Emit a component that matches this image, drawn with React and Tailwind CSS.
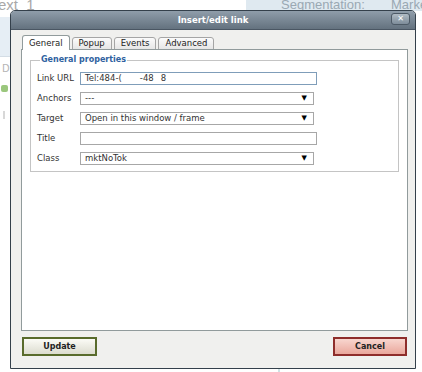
import React from "react"

const font = { fontFamily: '"DejaVu Sans", Verdana, sans-serif' }

function Tab({ label, active }) {
  return (
    <div
      className={
        active
          ? "h-[15px] px-[6px] flex items-center text-[8.5px] text-[#222] bg-white border border-b-0 border-[#919b9c] rounded-t-[3px] relative z-10"
          : "h-[13px] mt-[2px] px-[6px] flex items-center text-[8.5px] text-[#222] bg-gradient-to-b from-[#fbfbfb] to-[#e6e6e6] border border-[#a5a5a5] rounded-t-[3px]"
      }
    >
      {label}
    </div>
  )
}

function Row({ label, children }) {
  return (
    <div className="h-[20px] flex items-center">
      <span className="w-[43px] text-[8.5px] text-[#333]">{label}</span>
      {children}
    </div>
  )
}

function SelectBox({ value }) {
  return (
    <div className="w-[234px] h-[13px] border border-[#a7a7a7] bg-white flex items-center justify-between pl-[4px] pr-[6px]">
      <span className="text-[8.5px] text-[#333] leading-none">{value}</span>
      <span className="text-[7px] text-black leading-none">▼</span>
    </div>
  )
}

export default function App() {
  return (
    <div className="relative w-[422px] h-[372px] bg-white overflow-hidden" style={font}>
      {/* page behind the dialog */}
      <div className="absolute left-[-2px] top-[-6px] text-[15px] text-[#a8a8a8]" style={{ fontFamily: '"Liberation Sans", Arial, sans-serif' }}>
        ext_1
      </div>
      <div className="absolute left-0 top-[17px] w-[12px] h-[40px] bg-[#e6eef5] border-b border-[#d4dde5]" />
      <div className="absolute left-[2px] top-[61px] text-[10px] text-[#b5b5b5]">D</div>
      <div className="absolute left-[1px] top-[85px] w-[7px] h-[7px] rounded-[2px] bg-[#9bc77d]" />
      <div className="absolute left-[3px] top-[111px] w-[2px] h-[8px] bg-[#d8d8d8]" />
      <div className="absolute left-[246px] top-0 w-[176px] h-[11px] bg-[#dfe9f0]" />
      <div className="absolute left-[281px] top-[-5px] text-[13px] text-[#9aa8b3]" style={{ fontFamily: '"Liberation Sans", Arial, sans-serif' }}>
        Segmentation:
      </div>
      <div className="absolute left-[391px] top-[-5px] text-[13px] text-[#9aa8b3]" style={{ fontFamily: '"Liberation Sans", Arial, sans-serif' }}>
        Marke
      </div>
      <div className="absolute left-[278px] top-[368px] w-[2px] h-[6px] bg-[#cfe3e6]" />

      {/* dialog window */}
      <div className="absolute left-[10px] top-[10px] w-[406px] h-[359px] border border-[#34404b] rounded-t-[5px] bg-[#f0f0ee] flex flex-col overflow-hidden">
        {/* title bar */}
        <div className="relative h-[19px] flex items-center justify-center bg-gradient-to-b from-[#8f9daa] to-[#64727f] border-b border-[#4a5663]">
          <span className="text-[8.5px] font-bold text-white">Insert/edit link</span>
          <div className="absolute right-[5px] top-[2px] w-[19px] h-[12px] rounded-[3px] border border-[#4d5a66] bg-gradient-to-b from-[#b0bbc4] to-[#7e8d9a] flex items-center justify-center">
            <span className="text-[8px] font-bold text-white leading-none">✕</span>
          </div>
        </div>

        <div className="flex-1 flex flex-col pl-[10px] pr-[7px]">
          {/* tabs */}
          <div className="mt-[5px] flex gap-[2px] pl-[1px] h-[15px]">
            <Tab label="General" active />
            <Tab label="Popup" />
            <Tab label="Events" />
            <Tab label="Advanced" />
          </div>

          {/* panel */}
          <div className="-mt-px h-[282px] border border-[#919b9c] bg-white px-[8px]">
            <fieldset className="mt-[5px] border border-[#c4c4c4] pl-[6px] pt-[3px] pb-[3px]">
              <legend className="ml-[3px] px-[1px] text-[8px] leading-[10px] font-bold text-[#2f62a0]">
                General properties
              </legend>
              <Row label="Link URL">
                <div className="w-[237px] h-[13px] border border-[#7f9db9] bg-white flex items-center pl-[4px] text-[8.5px] text-[#333] leading-none">
                  <span>Tel:484-(</span>
                  <span className="ml-[18px]">-48</span>
                  <span className="ml-[7px]">8</span>
                </div>
              </Row>
              <Row label="Anchors">
                <SelectBox value="---" />
              </Row>
              <Row label="Target">
                <SelectBox value="Open in this window / frame" />
              </Row>
              <Row label="Title">
                <div className="w-[237px] h-[13px] border border-[#a7a7a7] bg-white" />
              </Row>
              <Row label="Class">
                <SelectBox value="mktNoTok" />
              </Row>
            </fieldset>
          </div>

          {/* buttons */}
          <div className="mt-[6px] flex justify-between pl-[1px] pr-[1px]">
            <button className="w-[75px] h-[19px] border-2 border-[#596b2c] bg-gradient-to-b from-[#fbfbf6] to-[#dcdccf] text-[8px] font-bold text-[#222] flex items-center justify-center">
              Update
            </button>
            <button className="w-[74px] h-[19px] border-2 border-[#8e2d2b] bg-gradient-to-b from-[#f8d6cf] to-[#e9a79c] text-[8px] font-bold text-[#222] flex items-center justify-center">
              Cancel
            </button>
          </div>
        </div>
      </div>
    </div>
  )
}
